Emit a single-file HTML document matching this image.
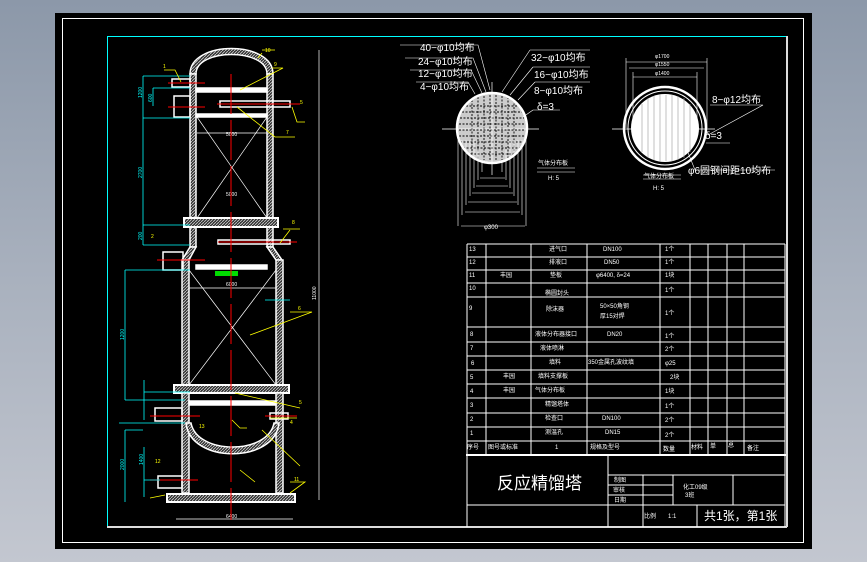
<!DOCTYPE html>
<html><head><meta charset="utf-8"><style>
html,body{margin:0;padding:0;}
body{width:867px;height:562px;overflow:hidden;background:linear-gradient(180deg,#8c98a9 0%,#a9b1be 50%,#c3c7d0 100%);}
svg{position:absolute;left:0;top:0;}
text{font-family:"Liberation Sans","Noto Sans CJK SC",sans-serif;}
</style></head><body>
<svg width="867" height="562" viewBox="0 0 867 562" xmlns="http://www.w3.org/2000/svg">
<defs>
<pattern id="h" width="3" height="3" patternUnits="userSpaceOnUse"><rect width="3" height="3" fill="#333"/><path d="M0 3 L3 0" stroke="#ccc" stroke-width="0.8"/></pattern>
</defs>
<rect x="55" y="13" width="757" height="536" fill="#000"/>
<rect x="62.5" y="18.5" width="741" height="524" fill="none" stroke="#fff" stroke-width="1"/>
<line x1="107" y1="36.5" x2="787" y2="36.5" stroke="#0ff" stroke-width="1"/>
<line x1="107.5" y1="36" x2="107.5" y2="527" stroke="#0ff" stroke-width="1"/>
<line x1="787" y1="36" x2="787" y2="527" stroke="#ddd" stroke-width="2"/>
<line x1="107" y1="527" x2="787" y2="527" stroke="#ddd" stroke-width="2"/>

<!-- TOWER -->
<g fill="url(#h)" stroke="#fff" stroke-width="1.5">
 <path d="M190 74 C190 40 273 40 273 74 L267 74 C267 48 196 48 196 74 Z"/>
 <rect x="190" y="74" width="6" height="144"/>
 <rect x="267" y="74" width="6" height="144"/>
 <rect x="190" y="227" width="6" height="20"/>
 <rect x="267" y="227" width="6" height="20"/>
 <rect x="184" y="218" width="94" height="9" stroke-width="2"/>
 <path d="M190 247 L182 260 L189 260 L196 247 Z M273 247 L282 260 L276 260 L267 247 Z"/>
 <rect x="182" y="260" width="7" height="125"/>
 <rect x="276" y="260" width="7" height="125"/>
 <rect x="174" y="385" width="115" height="8" stroke-width="2"/>
 <rect x="182" y="393" width="7" height="100"/>
 <rect x="276" y="393" width="7" height="100"/>
 <path d="M186 423 C190 464 275 464 279 423 L274 423 C268 455 197 455 191 423 Z"/>
 <rect x="167" y="494" width="128" height="8" stroke-width="2"/>
</g>
<g fill="none" stroke="#fff" stroke-width="1.5">
 <rect x="196" y="265" width="71" height="4" fill="#fff"/>
 <rect x="189" y="401" width="87" height="4" fill="#fff"/>
 <rect x="196" y="88" width="71" height="4" fill="#fff"/>
 <rect x="196" y="114" width="71" height="3" fill="#fff"/>
 <rect x="172" y="79" width="18" height="8"/>
 <rect x="174" y="96" width="16" height="21"/>
 <rect x="220" y="101" width="70" height="6"/>
 <rect x="218" y="240" width="72" height="4"/>
 <rect x="163" y="252" width="20" height="18"/>
 <rect x="155" y="408" width="27" height="13"/>
 <rect x="270" y="413" width="18" height="6"/>
 <rect x="158" y="476" width="24" height="12"/>
</g>
<g stroke="#fff" stroke-width="0.7">
 <path d="M197 117 L267 218 M267 117 L197 218"/>
 <path d="M189 270 L276 385 M276 270 L189 385"/>
 <line x1="197" y1="133" x2="267" y2="133"/>
 <line x1="189" y1="288" x2="276" y2="288"/>
 <line x1="319" y1="50" x2="319" y2="500"/>
 <line x1="176" y1="519" x2="293" y2="519"/>
</g>
<text x="226" y="136" fill="#fff" font-size="5">5000</text>
<text x="226" y="196" fill="#fff" font-size="5">5000</text>
<text x="226" y="286" fill="#fff" font-size="5">6000</text>
<text x="226" y="518" fill="#fff" font-size="5">6400</text>
<text x="316" y="300" fill="#fff" font-size="5" transform="rotate(-90 316 300)">11000</text>
<rect x="215" y="271" width="23" height="5" fill="#0d0"/>
<g stroke="#f00" stroke-width="1">
 <line x1="231" y1="74" x2="231" y2="520" stroke-dasharray="40 6"/>
 <line x1="217" y1="104" x2="300" y2="104"/>
 <line x1="168" y1="83" x2="205" y2="83"/>
 <line x1="168" y1="107" x2="205" y2="107"/>
 <line x1="218" y1="242" x2="297" y2="242"/>
 <line x1="157" y1="260" x2="205" y2="260"/>
 <line x1="150" y1="416" x2="200" y2="416"/>
 <line x1="265" y1="416" x2="297" y2="416"/>
 <line x1="150" y1="480" x2="198" y2="480"/>
</g>
<g stroke="#0ff" stroke-width="0.8" fill="none">
 <path d="M143 76 V118 M153 88 V106 M143 118 V225 M143 76 H190 M153 88 H190 M143 118 H190"/>
 <path d="M143 225 H190 M143 225 V245 M143 245 H190"/>
 <path d="M125 270 V400 M125 270 H190 M125 400 H185 M144 380 V420 M144 392 H190"/>
 <path d="M125 430 V502 M125 430 H143 M144 447 V497 M144 480 H160 M119 423 H185"/>
 <path d="M265 300 H290"/>
</g>
<g fill="#0ff" font-size="5">
 <text x="142" y="98" transform="rotate(-90 142 98)">1200</text>
 <text x="152" y="102" transform="rotate(-90 152 102)">600</text>
 <text x="142" y="178" transform="rotate(-90 142 178)">2700</text>
 <text x="142" y="240" transform="rotate(-90 142 240)">200</text>
 <text x="124" y="340" transform="rotate(-90 124 340)">1200</text>
 <text x="124" y="470" transform="rotate(-90 124 470)">2000</text>
 <text x="143" y="465" transform="rotate(-90 143 465)">1400</text>
</g>
<g stroke="#ff0" stroke-width="0.8" fill="none">
 <path d="M164 70 H175 L181 82 M262 53 L258 58 M262 50 H275 M272 68 H283 L240 90 M292 107 L297 122 H305 M237 107 L275 137 H295"/>
 <path d="M283 229 H300 M290 230 L280 243 M290 312 H312 L250 335 M235 393 L300 408 M270 418 H297 M232 420 L240 428 H247 M262 430 L300 466 M240 470 L255 482 M290 482 H305 L290 493 M150 498 L165 495"/>
</g>
<g fill="#ff0" font-size="5">
 <text x="265" y="52">10</text><text x="274" y="66">9</text><text x="286" y="134">7</text>
 <text x="300" y="104">5</text><text x="163" y="68">1</text><text x="292" y="224">8</text>
 <text x="151" y="238">2</text><text x="298" y="310">6</text><text x="299" y="404">5</text>
 <text x="290" y="424">4</text><text x="199" y="428">13</text><text x="155" y="463">12</text>
 <text x="294" y="481">11</text>
</g>

<!-- LEFT CIRCLE -->
<circle cx="492" cy="128" r="34" fill="#ccc"/>
<g stroke="#000" stroke-width="0.9" stroke-dasharray="2 1.5">
 <path d="M466 106 H518 M462 112 H522 M460 118 H524 M459 124 H525 M459 130 H525 M459 136 H525 M460 142 H524 M463 148 H521 M467 154 H517"/>
 <path d="M472 100 V156 M478 97 V159 M484 96 V160 M490 95 V161 M496 95 V161 M502 96 V160 M508 97 V159 M514 100 V156"/>
</g>
<g stroke="#fff" fill="none">
 <circle cx="492" cy="128" r="35" stroke-width="2.5"/>
 <line x1="442" y1="129" x2="539" y2="129" stroke-width="0.7"/>
 <line x1="492" y1="82" x2="492" y2="175" stroke-width="0.7"/>
 <g stroke-width="0.6">
  <path d="M458 140 V226 M526 140 V226 M461 226 H525"/>
  <path d="M462 140 V215 M522 140 V215 M465 212 H520"/>
  <path d="M466 140 V205 M518 140 V205 M468 202 H517"/>
  <path d="M470 140 V196 M514 140 V196 M472 193 H513"/>
  <path d="M474 140 V188 M510 140 V188 M476 186 H508"/>
  <path d="M478 150 V180 M506 150 V180 M480 178 H505"/>
  <path d="M482 160 V172 M502 160 V172"/>
 </g>
 <g stroke-width="0.6">
  <path d="M400 45 H478 L490 90 M405 58 H473 L486 92 M410 70 H471 L482 93 M416 82 H468 L475 94"/>
  <path d="M530 50 H590 M530 50 L502 92 M533 67 H590 M533 67 L510 95 M535 82 H590 M535 82 L518 100 M533 110 H560 M533 110 L523 117"/>
  <path d="M537 168 H575 M537 172 H575"/>
 </g>
</g>
<g fill="#fff" font-size="10">
 <text x="420" y="51">40−φ10均布</text>
 <text x="418" y="65">24−φ10均布</text>
 <text x="418" y="77">12−φ10均布</text>
 <text x="420" y="90">4−φ10均布</text>
 <text x="531" y="61">32−φ10均布</text>
 <text x="534" y="78">16−φ10均布</text>
 <text x="534" y="94">8−φ10均布</text>
 <text x="537" y="110">δ=3</text>
</g>
<g fill="#fff" font-size="6">
 <text x="538" y="165">气体分布板</text><text x="548" y="180">H: 5</text>
 <text x="484" y="229">φ300</text>
</g>

<!-- RIGHT CIRCLE -->
<g stroke="#fff" fill="none">
 <circle cx="665" cy="128" r="41" stroke-width="2.5"/>
 <circle cx="665" cy="128" r="37" stroke-width="1"/>
 <line x1="612" y1="129" x2="715" y2="129" stroke-width="0.7"/>
 <g stroke-width="0.6">
  <path d="M626 62 H707 M626 58 V128 M707 58 V128 M629 68 H704 M633 77 H697 M633 72 V128 M697 72 V128"/>
  <path d="M710 105 H763 L708 135 M706 143 H730 M687 150 L695 170 H775 M643 175 H681 M643 179 H681"/>
 </g>
</g>
<circle cx="665" cy="128" r="34" fill="#fff"/>
<g stroke="#999" stroke-width="0.6">
 <path d="M642 104 V152 M648 98 V158 M654 96 V160 M660 95 V161 M666 95 V161 M672 95 V161 M678 96 V160 M684 98 V158 M690 104 V152"/>
</g>
<g fill="#fff" font-size="10">
 <text x="712" y="103">8−φ12均布</text>
 <text x="705" y="139">δ=3</text>
 <text x="688" y="174">φ6圆钢间距10均布</text>
</g>
<g fill="#fff" font-size="5">
 <text x="655" y="58">φ1700</text><text x="655" y="66">φ1550</text><text x="655" y="75">φ1400</text>
</g>
<g fill="#fff" font-size="6"><text x="644" y="178">气体分布板</text><text x="653" y="190">H: 5</text></g>

<!-- TABLE -->
<g stroke="#fff" stroke-width="1" fill="none">
 <path d="M467 244 H785 M467 257 H785 M467 270 H785 M467 283 H785 M467 297 H785 M467 327 H785 M467 342 H785 M467 356 H785 M467 370 H785 M467 384 H785 M467 398 H785 M467 413 H785 M467 427 H785 M467 441 H785"/>
 <path d="M486 244 V455 M531 244 V455 M587 244 V455 M660 244 V455 M690 244 V455 M708 244 V455 M727 244 V455 M744 244 V455 M467 244 V527 M785 244 V527"/>
 <path d="M466 455 H786" stroke-width="2"/>
 <path d="M467 505 H785 M608 455 V527 M608 475 H785 M608 485 H673 M608 495 H673 M643 475 V527 M673 475 V505 M733 475 V505 M697 505 V527"/>
</g>
<g fill="#fff" font-size="6">
 <text x="469" y="251">13</text><text x="549" y="251">进气口</text><text x="603" y="251">DN100</text><text x="665" y="251">1个</text>
 <text x="469" y="264">12</text><text x="549" y="264">排液口</text><text x="604" y="264">DN50</text><text x="665" y="264">1个</text>
 <text x="469" y="277">11</text><text x="500" y="277">丰园</text><text x="550" y="277">垫板</text><text x="596" y="277">φ6400, δ=24</text><text x="665" y="277">1块</text>
 <text x="469" y="290">10</text><text x="545" y="295">椭圆封头</text><text x="665" y="292">1个</text>
 <text x="469" y="310">9</text><text x="546" y="311">除沫器</text><text x="600" y="308">50×50角钢</text><text x="600" y="318">厚15对焊</text><text x="665" y="315">1个</text>
 <text x="470" y="336">8</text><text x="535" y="336">液体分布器接口</text><text x="607" y="336">DN20</text><text x="665" y="338">1个</text>
 <text x="470" y="350">7</text><text x="540" y="350">液体喷淋</text><text x="665" y="351">2个</text>
 <text x="471" y="365">6</text><text x="549" y="364">填料</text><text x="588" y="364">350金属孔波纹填</text><text x="665" y="365">φ25</text>
 <text x="470" y="379">5</text><text x="503" y="378">丰园</text><text x="538" y="378">填料支撑板</text><text x="670" y="379">2块</text>
 <text x="470" y="393">4</text><text x="503" y="392">丰园</text><text x="535" y="392">气体分布板</text><text x="665" y="393">1块</text>
 <text x="470" y="407">3</text><text x="545" y="406">精馏塔体</text><text x="665" y="408">1个</text>
 <text x="470" y="421">2</text><text x="545" y="420">检查口</text><text x="602" y="420">DN100</text><text x="665" y="422">2个</text>
 <text x="470" y="435">1</text><text x="545" y="434">测温孔</text><text x="605" y="434">DN15</text><text x="665" y="437">2个</text>
 <text x="467" y="449">序号</text><text x="488" y="449">图号或标准</text><text x="555" y="449">1</text><text x="590" y="449">规格及型号</text><text x="663" y="451">数量</text><text x="691" y="449">材料</text><text x="710" y="448">单</text><text x="728" y="447">总</text><text x="747" y="450">备注</text>
 <text x="614" y="482">制图</text><text x="613" y="492">审核</text><text x="614" y="502">日期</text>
 <text x="683" y="489">化工09级</text><text x="685" y="497">3班</text>
 <text x="644" y="518">比例</text><text x="668" y="518">1:1</text>
</g>
<text x="497" y="489" fill="#fff" font-size="17">反应精馏塔</text>
<text x="704" y="520" fill="#fff" font-size="12">共1张，第1张</text>
</svg>
</body></html>
